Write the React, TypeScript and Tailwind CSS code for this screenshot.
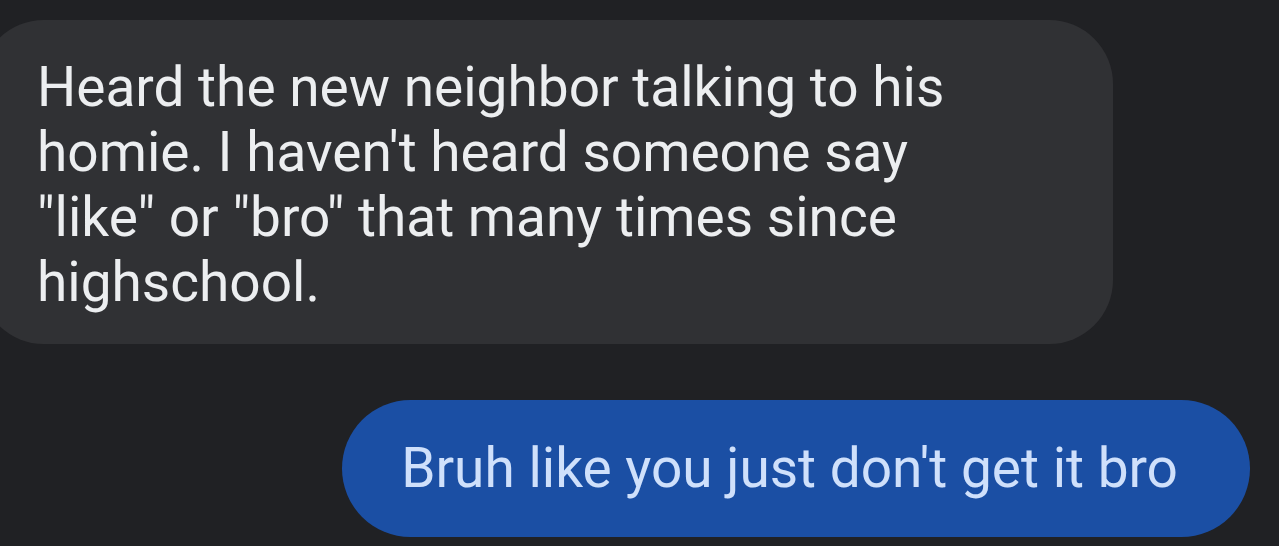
import React from 'react';

const FONT = "Roboto, 'Noto Sans', sans-serif";

export default function App() {
  return (
    <div
      className="h-[546px] w-full overflow-hidden bg-[#202124] flex flex-col pt-[20px]"
      style={{ fontFamily: FONT }}
    >
      {/* Incoming message */}
      <div className="-ml-[20px] w-[1133px] rounded-[64px] bg-[#303134] pl-[57px] pr-[110px] pt-[35px] pb-[29px]">
        <p className="text-[55px] leading-[65px] text-[#eceef0]">
          Heard the new neighbor talking to his homie. I haven't heard someone say "like" or "bro" that many times since highschool.
        </p>
      </div>

      {/* Outgoing message */}
      <div className="self-end mr-[29px] mt-[56px] rounded-full bg-[#1b4fa4] pl-[59px] pr-[72px] py-[36px]">
        <p className="text-[55px] leading-[65px] text-[#cfe0fb] whitespace-nowrap">
          Bruh like you just don't get it bro
        </p>
      </div>
    </div>
  );
}
